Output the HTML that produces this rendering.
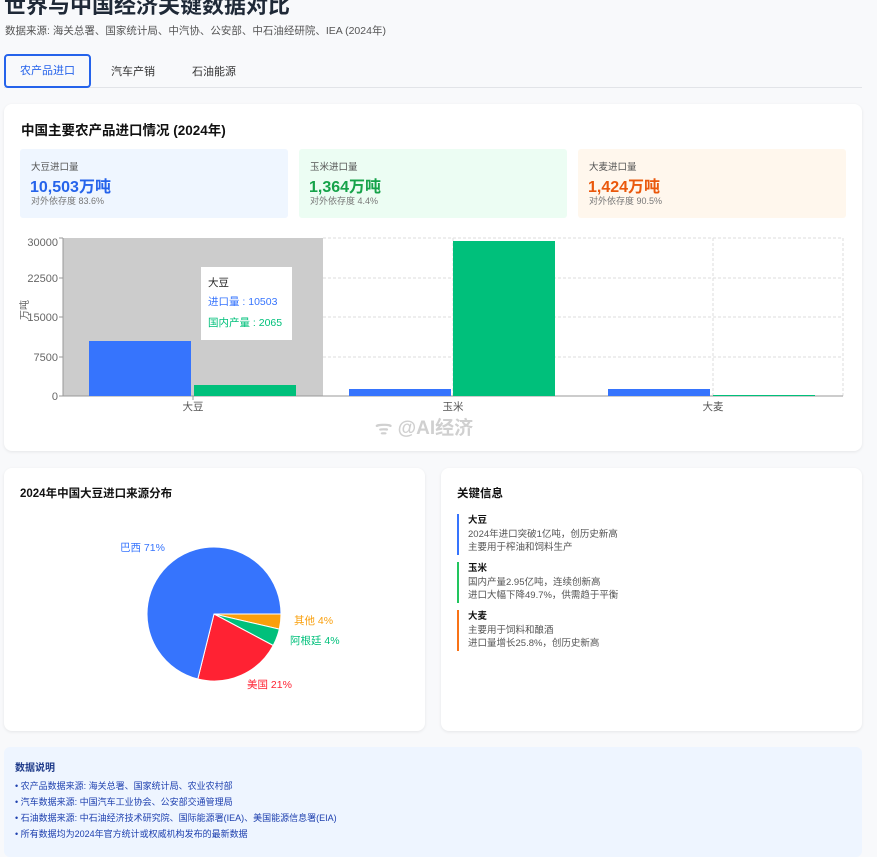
<!DOCTYPE html>
<html><head><meta charset="utf-8"><style>
*{margin:0;padding:0;box-sizing:border-box}
body{width:877px;height:847px;overflow:hidden;background:#f8f9fb;font-family:"Liberation Sans","Noto Sans CJK SC",sans-serif;position:relative;color:#111}
.a{position:absolute;white-space:nowrap}
.card{position:absolute;background:#fff;border-radius:8px;box-shadow:0 1px 3px rgba(0,0,0,.08)}
.stat{position:absolute;top:149px;height:69px;width:268px;border-radius:3px}
.stat .l{position:absolute;left:11px;top:10px;font-size:9.5px;color:#555}
.stat .v{position:absolute;left:10px;top:24px;font-size:16px;font-weight:bold}
.stat .s{position:absolute;left:11px;top:45px;font-size:9px;color:#777}
.ki{position:absolute;left:457px;border-left:2px solid;padding-left:9px;font-size:9.5px;line-height:13.5px;color:#555}
.ki b{color:#111}
.n{font-size:9px;color:#1e40af;line-height:16px}
</style></head><body>
<div class="a" style="left:4px;top:-12px;font-size:22px;font-weight:bold;color:#1f2937">世界与中国经济关键数据对比</div>
<div class="a" style="left:5px;top:23px;font-size:10.5px;color:#555">数据来源: 海关总署、国家统计局、中汽协、公安部、中石油经研院、IEA (2024年)</div>
<div style="position:absolute;left:4px;top:87px;width:858px;height:1px;background:#e2e4e8"></div>
<div class="a" style="left:4px;top:54px;width:87px;height:34px;border:2px solid #2563eb;border-radius:4px;font-size:11px;color:#2563eb;text-align:center;line-height:30px">农产品进口</div>
<div class="a" style="left:111px;top:63px;font-size:11px;color:#333">汽车产销</div>
<div class="a" style="left:192px;top:63px;font-size:11px;color:#333">石油能源</div>

<div class="card" style="left:4px;top:104px;width:858px;height:347px"></div>
<div class="a" style="left:21px;top:119px;font-size:13.5px;font-weight:bold">中国主要农产品进口情况 (2024年)</div>
<div class="stat" style="left:20px;background:#eff6ff"><div class="l">大豆进口量</div><div class="v" style="color:#2563eb">10,503万吨</div><div class="s">对外依存度 83.6%</div></div>
<div class="stat" style="left:299px;background:#ecfdf3"><div class="l">玉米进口量</div><div class="v" style="color:#16a34a">1,364万吨</div><div class="s">对外依存度 4.4%</div></div>
<div class="stat" style="left:578px;background:#fff7ed"><div class="l">大麦进口量</div><div class="v" style="color:#ea580c">1,424万吨</div><div class="s">对外依存度 90.5%</div></div>

<svg class="a" style="left:0;top:0" width="877" height="460">
<rect x="63" y="238" width="260" height="158" fill="#cccccc"/>
<g stroke="#ddd" stroke-dasharray="3,2" fill="none">
<line x1="323" y1="238" x2="843" y2="238"/><line x1="323" y1="278" x2="843" y2="278"/><line x1="323" y1="317" x2="843" y2="317"/><line x1="323" y1="357" x2="843" y2="357"/>
<line x1="453" y1="238" x2="453" y2="396"/><line x1="713" y1="238" x2="713" y2="396"/><line x1="843" y1="238" x2="843" y2="396"/>
</g>
<line x1="63" y1="238" x2="63" y2="396" stroke="#999"/>
<line x1="63" y1="396" x2="843" y2="396" stroke="#999"/>
<g stroke="#999"><line x1="59" y1="238" x2="63" y2="238"/><line x1="59" y1="278" x2="63" y2="278"/><line x1="59" y1="317" x2="63" y2="317"/><line x1="59" y1="357" x2="63" y2="357"/><line x1="59" y1="396" x2="63" y2="396"/><line x1="193" y1="396" x2="193" y2="400"/></g>
<rect x="89" y="341" width="102" height="55" fill="#3674fd"/>
<rect x="194" y="385" width="102" height="11" fill="#00c07b"/>
<rect x="349" y="389" width="102" height="7" fill="#3674fd"/>
<rect x="453" y="241" width="102" height="155" fill="#00c07b"/>
<rect x="608" y="389" width="102" height="7" fill="#3674fd"/>
<rect x="713" y="395" width="102" height="1" fill="#00c07b"/>
<g font-size="11" fill="#666" text-anchor="end"><text x="58" y="246">30000</text><text x="58" y="282">22500</text><text x="58" y="321">15000</text><text x="58" y="361">7500</text><text x="58" y="400">0</text></g>
<g font-size="10.5" fill="#555" text-anchor="middle"><text x="193" y="410">大豆</text><text x="453" y="410">玉米</text><text x="713" y="410">大麦</text></g>
<text transform="translate(28,310) rotate(-90)" font-size="10" fill="#666" text-anchor="middle">万吨</text>
<rect x="201" y="267" width="91" height="73" fill="#fff"/>
<text x="208" y="286" font-size="10.5" fill="#222">大豆</text>
<text x="208" y="305" font-size="10.5" fill="#3674fd">进口量 : 10503</text>
<text x="208" y="326" font-size="10.5" fill="#00c07b">国内产量 : 2065</text>
<text x="375" y="434" font-size="19" fill="#c8c8c8" font-weight="bold" opacity=".85">ᯤ @AI经济</text>
</svg>

<div class="card" style="left:4px;top:468px;width:421px;height:263px"></div>
<div class="a" style="left:20px;top:485px;font-size:11.5px;font-weight:bold">2024年中国大豆进口来源分布</div>
<svg class="a" style="left:0;top:460px" width="430" height="280">
<g transform="translate(0,-460)" stroke="#fff" stroke-width="1">
<path d="M214 614 L281 614 A67 67 0 0 1 279.3 629.1 Z" fill="#fa9f0b"/>
<path d="M214 614 L279.3 629.1 A67 67 0 0 1 273.2 645.5 Z" fill="#00c07b"/>
<path d="M214 614 L273.2 645.5 A67 67 0 0 1 197.8 679 Z" fill="#ff2233"/>
<path d="M214 614 L197.8 679 A67 67 0 1 1 281 614 Z" fill="#3674fd"/>
</g>
<g font-size="10.5" transform="translate(0,-460)">
<text x="120" y="551" fill="#3674fd">巴西 71%</text>
<text x="294" y="624" fill="#fa9f0b">其他 4%</text>
<text x="290" y="644" fill="#00c07b">阿根廷 4%</text>
<text x="247" y="688" fill="#ff2233">美国 21%</text>
</g>
</svg>

<div class="card" style="left:441px;top:468px;width:421px;height:263px"></div>
<div class="a" style="left:457px;top:485px;font-size:11.5px;font-weight:bold">关键信息</div>
<div class="ki a" style="top:514px;border-color:#3674fd"><b>大豆</b><br>2024年进口突破1亿吨，创历史新高<br>主要用于榨油和饲料生产</div>
<div class="ki a" style="top:562px;border-color:#22c55e"><b>玉米</b><br>国内产量2.95亿吨，连续创新高<br>进口大幅下降49.7%，供需趋于平衡</div>
<div class="ki a" style="top:610px;border-color:#f97316"><b>大麦</b><br>主要用于饲料和酿酒<br>进口量增长25.8%，创历史新高</div>

<div style="position:absolute;left:4px;top:747px;width:858px;height:110px;background:#eef5ff;border-radius:6px"></div>
<div class="a" style="left:15px;top:759px;font-size:10px;font-weight:bold;color:#1e3a8a">数据说明</div>
<div class="a n" style="left:15px;top:778px">• 农产品数据来源: 海关总署、国家统计局、农业农村部<br>• 汽车数据来源: 中国汽车工业协会、公安部交通管理局<br>• 石油数据来源: 中石油经济技术研究院、国际能源署(IEA)、美国能源信息署(EIA)<br>• 所有数据均为2024年官方统计或权威机构发布的最新数据</div>
</body></html>
